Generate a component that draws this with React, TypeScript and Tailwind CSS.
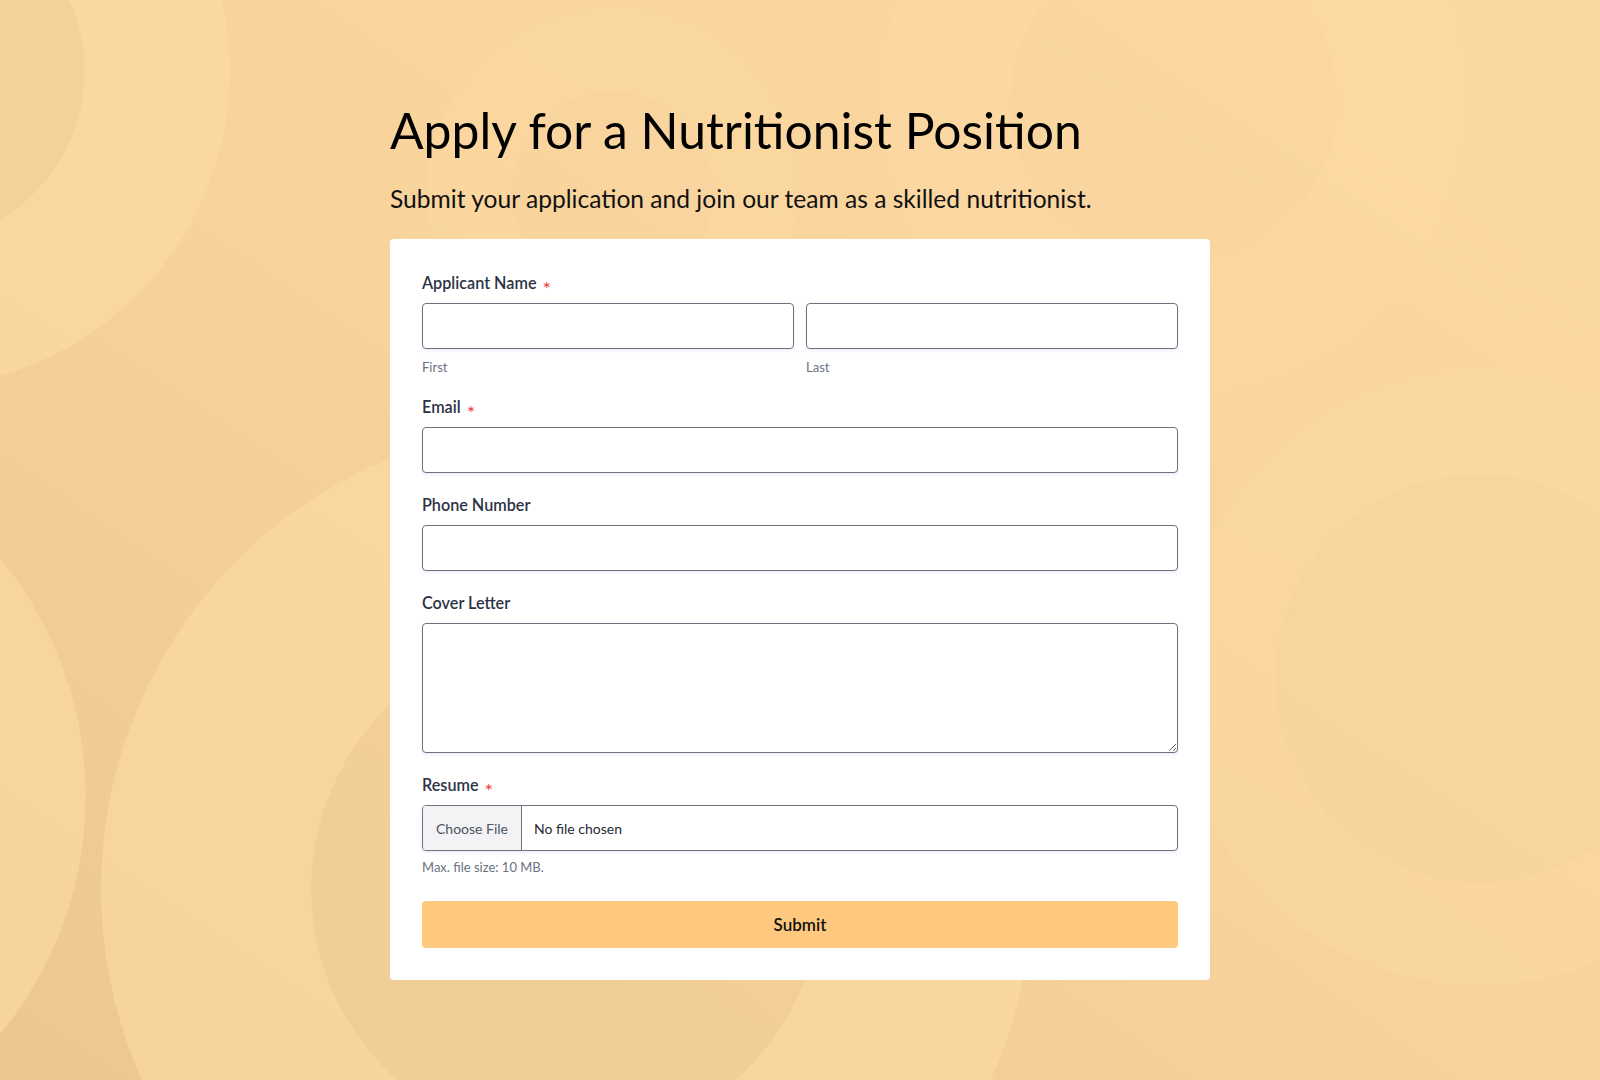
import type { ReactNode } from "react";

const FONT = { fontFamily: "Lato, 'Noto Sans', sans-serif" };

// Decorative background: soft concentric circles over a warm gradient.
function Backdrop() {
  return (
    <svg
      className="pointer-events-none absolute inset-0 h-full w-full"
      viewBox="0 0 1568 1058"
      preserveAspectRatio="none"
      aria-hidden="true"
    >
      <defs>
        <linearGradient id="bg" x1="1" y1="0" x2="0" y2="1">
          <stop offset="0" stopColor="#fdd9a2" />
          <stop offset="0.5" stopColor="#f8d39c" />
          <stop offset="1" stopColor="#ecc791" />
        </linearGradient>
      </defs>
      <rect width="1568" height="1058" fill="url(#bg)" />
      {/* top-left */}
      <circle cx="-85" cy="70" r="310" fill="#ffdda6" opacity="0.55" />
      <circle cx="-85" cy="70" r="168" fill="#ecc892" opacity="0.45" />
      {/* top-center */}
      <circle cx="600" cy="189" r="182" fill="#ffdda6" opacity="0.3" />
      <circle cx="600" cy="189" r="99" fill="#ecc892" opacity="0.12" />
      {/* top-right */}
      <circle cx="1150" cy="100" r="288" fill="#ffdda6" opacity="0.25" />
      <circle cx="1150" cy="100" r="160" fill="#ecc892" opacity="0.1" />
      {/* left edge */}
      <circle cx="-281" cy="780" r="365" fill="#ffdda6" opacity="0.55" />
      {/* bottom-center */}
      <circle cx="555" cy="871" r="456" fill="#ffdda6" opacity="0.55" />
      <circle cx="555" cy="871" r="250" fill="#ecc892" opacity="0.55" />
      {/* right */}
      <circle cx="1450" cy="665" r="300" fill="#ffdda6" opacity="0.3" />
      <circle cx="1450" cy="665" r="200" fill="#ecc892" opacity="0.15" />
    </svg>
  );
}

function Label({ children, required }: { children: ReactNode; required?: boolean }) {
  return (
    <div className="mb-2 flex h-6 items-center text-[16.2px] font-semibold text-[#2c3345]">
      {children}
      {required && (
        <span className="ml-[6px] inline-block translate-y-[5px] text-[20px] leading-none font-normal text-[#f23a3c]">*</span>
      )}
    </div>
  );
}

const inputCls =
  "block h-[46px] w-full rounded-[4px] border border-[#6b7280] bg-white px-3 text-[15px] text-[#2c3345] shadow-[0_2px_3px_rgba(219,222,240,0.5)] outline-none";

export default function App() {
  return (
    <div className="relative min-h-[1080px] w-full overflow-hidden" style={FONT}>
      <Backdrop />
      <div className="relative mx-auto w-[820px] pt-[100px] pb-[100px]">
        <h1 className="text-[49.8px] leading-[60px] font-normal text-black">
          Apply for a Nutritionist Position
        </h1>
        <p className="mt-[21px] text-[24.6px] leading-[36px] text-[#111]">
          Submit your application and join our team as a skilled nutritionist.
        </p>

        <form className="mt-[22px] rounded-[4px] bg-white px-8 pt-8 pb-8">
          {/* Applicant name */}
          <div>
            <Label required>Applicant Name</Label>
            <div className="grid grid-cols-2 gap-3">
              <div>
                <input className={inputCls} />
                <div className="mt-[10px] text-[13px] leading-4 text-[#6b7280]">First</div>
              </div>
              <div>
                <input className={inputCls} />
                <div className="mt-[10px] text-[13px] leading-4 text-[#6b7280]">Last</div>
              </div>
            </div>
          </div>

          <div className="mt-5">
            <Label required>Email</Label>
            <input type="email" className={inputCls} />
          </div>

          <div className="mt-5">
            <Label>Phone Number</Label>
            <input type="tel" className={inputCls} />
          </div>

          <div className="mt-5">
            <Label>Cover Letter</Label>
            <textarea className="block h-[130px] w-full resize-y rounded-[4px] border border-[#6b7280] bg-white px-3 py-2 text-[15px] shadow-[0_2px_3px_rgba(219,222,240,0.5)] outline-none" />
          </div>

          <div className="mt-5">
            <Label required>Resume</Label>
            <div className="flex h-[46px] w-full overflow-hidden rounded-[4px] border border-[#6b7280] bg-white shadow-[0_2px_3px_rgba(219,222,240,0.5)]">
              <span className="flex w-[99px] items-center justify-center border-r border-[#6b7280] bg-[#f3f3f5] text-[14px] text-[#4b5563]">
                Choose File
              </span>
              <span className="flex items-center pl-3 text-[14px] text-[#1f2937]">No file chosen</span>
            </div>
            <div className="mt-2 text-[13px] leading-4 text-[#6b7280]">Max. file size: 10 MB.</div>
          </div>

          <button
            type="button"
            className="mt-[26px] block h-[47px] w-full rounded-[4px] bg-[#fec97e] text-[17px] font-semibold text-[#111]"
          >
            Submit
          </button>
        </form>
      </div>
    </div>
  );
}
